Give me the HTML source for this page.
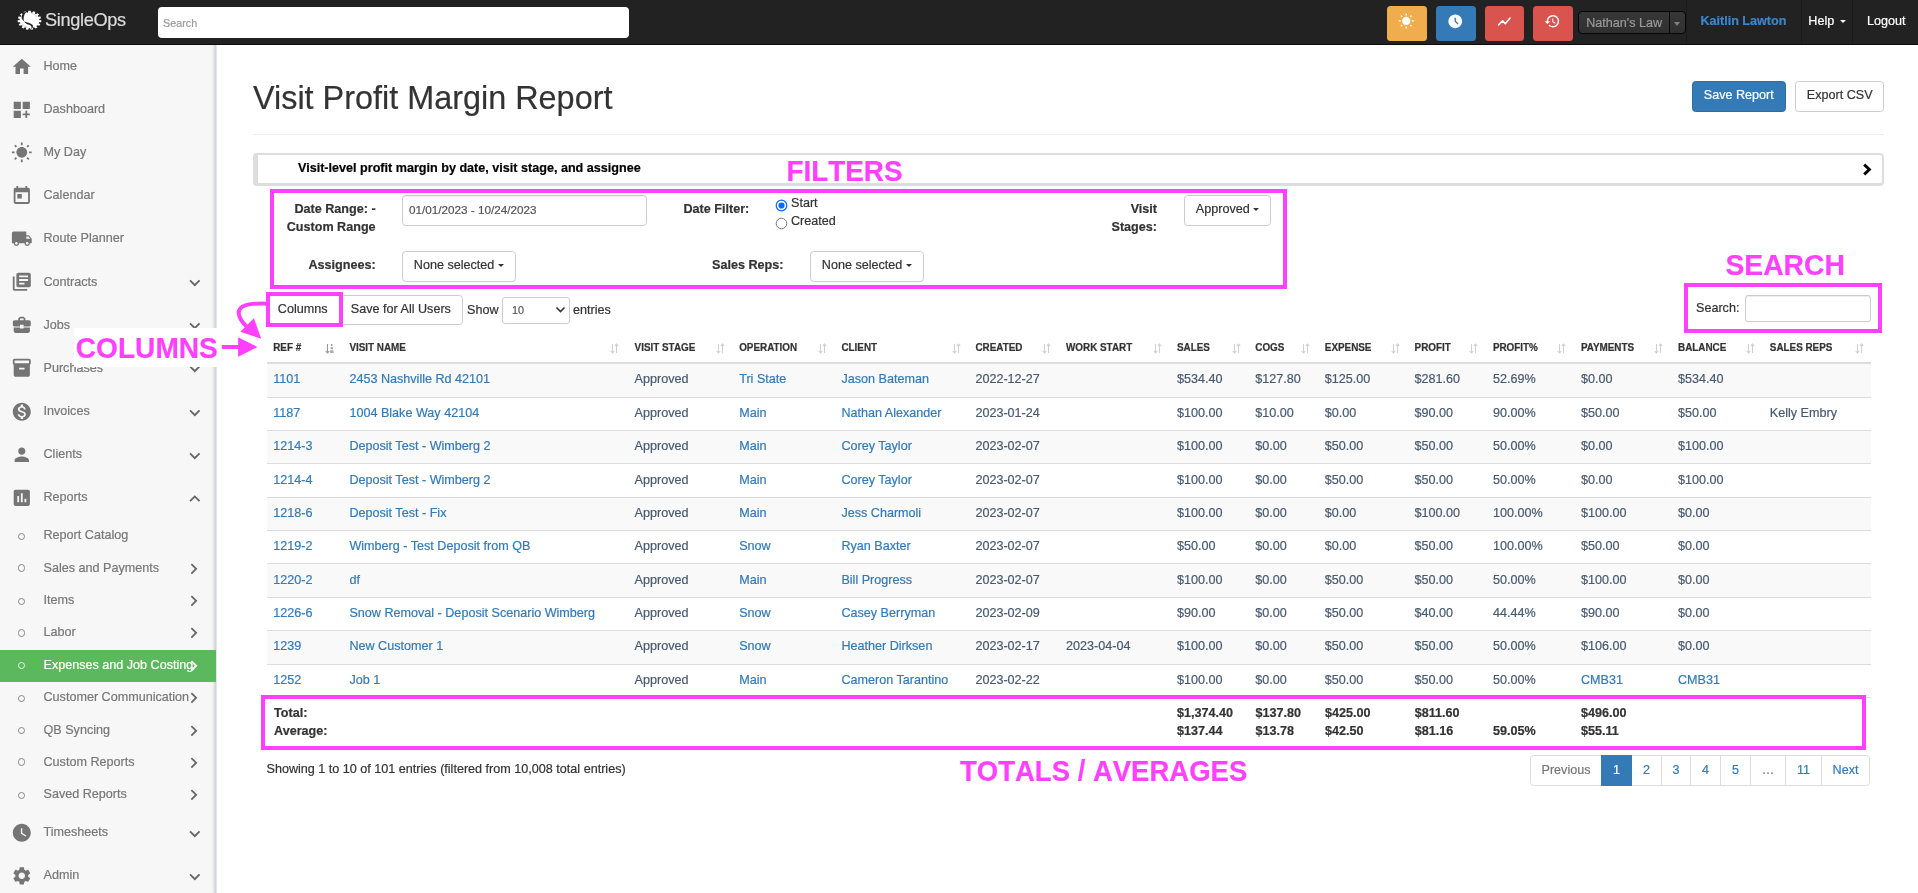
<!DOCTYPE html>
<html><head><meta charset="utf-8"><title>Visit Profit Margin Report</title>
<style>
*{box-sizing:border-box}
html,body{margin:0;padding:0}
body{width:1918px;height:893px;overflow:hidden;position:relative;background:#fff;font-family:"Liberation Sans",sans-serif;font-size:12.6px;line-height:18px;color:#333;-webkit-text-stroke:0.2px}
a{color:#337ab7;text-decoration:none}
/* navbar */
#nav,#side,#main,#anno{will-change:transform}
#nav{position:absolute;left:0;top:0;width:1918px;height:45px;background:#222;border-bottom:1px solid #0c0c0c}
#nav .sep{position:absolute;top:0;width:1px;height:44px;background:#1a1a1a}
#brand{position:absolute;left:45px;top:7.5px;font-size:18.2px;line-height:24px;color:#dcdcdc;letter-spacing:-0.36px}
#logo{position:absolute;left:17.2px;top:10.050px;width:25px;height:20.5px}
#nsearch{position:absolute;left:158px;top:7px;width:471px;height:31px;background:#fff;border-radius:4px;color:#999;font-size:10.8px;line-height:33px;padding-left:5px}
.nb{position:absolute;top:6px;height:35px;border-radius:3.5px}
.nb svg{position:absolute;left:50%;top:50%;width:16.5px;height:16.5px;margin:-11px 0 0 -8.600px;fill:#fff}
#nsel{position:absolute;left:1578px;top:11px;width:107.5px;height:22.6px;border:1px solid #060606;border-radius:4px;background:linear-gradient(#373737,#303030);color:#9a9a9a;font-size:12.6px;line-height:22.6px;padding-left:7.2px}
#nsel i{position:absolute;right:0;top:0;width:16px;height:20.6px;border-left:1px solid #060606;border-radius:0 3px 3px 0}
#nsel i:after{content:"";position:absolute;left:4.5px;top:10px;border:3px solid transparent;border-top:4.5px solid #808080}
.nl{position:absolute;top:12px;font-size:12.6px;line-height:18px;color:#fff;white-space:nowrap}
/* sidebar */
#side{position:absolute;left:0;top:45px;width:217px;height:848px;background:#f7f7f7;border-right:1px solid #dfe8f0;box-shadow:inset -4px 0 3px -2px rgba(0,0,0,.16)}
.si{position:absolute;left:0;width:214px;height:30px;color:#777}
.si svg.ic{position:absolute;left:10.8px;top:4.7px;width:21.6px;height:21.6px;fill:#757575}
.si span{position:absolute;left:43.5px;top:6px;white-space:nowrap}
.si svg.ch{position:absolute;left:184px;top:5.5px;width:21.6px;height:21.6px;fill:#666}
.sub{position:absolute;left:0;width:216px;height:32.4px;color:#777}
.sub b{position:absolute;left:17.6px;top:14.1px;width:7.6px;height:7.6px;border:1px solid #888;border-radius:50%}
.sub span{position:absolute;left:43.5px;top:7px;white-space:nowrap}
.sub svg.ch{position:absolute;left:183px;top:6px;width:21.6px;height:21.6px;fill:#666}
.sub.act{background:#5cb85c;color:#fff}
.sub.act b{border-color:#e8f5e8;top:12.7px}
.sub.act span{top:6px}
.sub.act svg.ch{top:5px}
.sub.act svg.ch{fill:#fff}
/* main */
h1{position:absolute;left:253px;top:78px;margin:0;font-size:32.4px;line-height:40px;font-weight:400;color:#333;white-space:nowrap}
.btn{position:absolute;height:30.6px;border:1px solid #ccc;border-radius:3.6px;background:#fff;color:#333;font-size:12.6px;line-height:18px;padding:4.5px 10.8px;white-space:nowrap}
.btn.pri{background:#337ab7;border-color:#2e6da4;color:#fff}
.caret{display:inline-block;width:0;height:0;margin-left:0;vertical-align:middle;border-top:3.6px solid;border-right:3.6px solid transparent;border-left:3.6px solid transparent}
.lbl{position:absolute;font-weight:700;text-align:right;white-space:nowrap;color:#333}
.txt{position:absolute;white-space:nowrap}
.mg{position:absolute;border:4px solid #ff40ff}
.mt{position:absolute;color:#ff40ff;font-weight:700;font-size:27.4px;line-height:30px;white-space:nowrap;font-kerning:none;transform:scaleY(1.06);transform-origin:0 50%}
/* table */
#tbl{position:absolute;left:267px;top:334px;width:1604px;height:420px}
.th{position:absolute;top:0;height:28px;font-size:9.9px;font-weight:700;text-transform:uppercase;color:#333;line-height:14px;padding:7px 0 0 7px;white-space:nowrap}
.th span{display:inline-block;transform:scaleY(1.13);transform-origin:0 62%}
.th svg{position:absolute;right:8.2px;top:8.5px;width:9px;height:11px}
.tr{position:absolute;left:0;width:1604px;height:33.33px;border-top:1px solid #ddd}
.tr.odd{background:#f9f9f9}
.td{position:absolute;top:5.6px;white-space:nowrap;color:#485a70}
.tf{position:absolute;white-space:nowrap;font-weight:700;color:#333}
.pg{position:absolute;top:755px;height:30.6px;border:1px solid #ddd;background:#fff;color:#337ab7;line-height:18px;padding:5.4px 0;text-align:center}
</style></head><body>
<div id="nav"><svg id="logo" viewBox="-12.5 -10.25 25 20.5"><polygon fill="#fff" points="-1.14,-9.56 1.14,-9.56 1.45,-7.81 2.62,-7.61 3.78,-9.10 5.86,-8.36 5.26,-6.66 6.23,-6.10 8.04,-7.08 9.57,-5.71 8.17,-4.36 8.77,-3.52 10.92,-3.83 11.62,-2.08 9.66,-1.30 9.79,-0.34 11.90,0.08 11.67,1.91 9.48,1.98 9.11,2.90 10.83,3.98 9.69,5.57 7.67,4.92 6.87,5.63 7.89,7.19 6.04,8.27 4.52,7.01 3.43,7.40 3.58,9.16 1.35,9.54 0.60,7.89 -0.60,7.89 -1.35,9.54 -3.58,9.16 -3.43,7.40 -4.52,7.01 -6.04,8.27 -7.89,7.19 -6.87,5.63 -7.67,4.92 -9.69,5.57 -10.83,3.98 -9.11,2.90 -9.48,1.98 -11.67,1.91 -11.90,0.08 -9.79,-0.34 -9.66,-1.30 -11.62,-2.08 -10.92,-3.83 -8.77,-3.52 -8.17,-4.36 -9.57,-5.71 -8.04,-7.08 -6.23,-6.10 -5.26,-6.66 -5.86,-8.36 -3.78,-9.10 -2.62,-7.61 -1.45,-7.81"/><path d="M-2 -9.400C-9.500 -7 -10 0.300 -3 2 3 3.400 5.800 5.500 1.500 9.600 3 6.200 1.500 4.800 -1.500 4.200 -7.500 3 -7 -5.500 -2 -9.400z" fill="#222"/><path d="M2 -6.800C5 -6.600 7 -5 7.500 -3" fill="none" stroke="#bbb" stroke-width="0.600"/><path d="M-7.500 3C-6.500 5.500 -4 7 -1.500 7.200" fill="none" stroke="#bbb" stroke-width="0.600"/></svg><div id="brand">SingleOps</div><div id="nsearch">Search</div><div class="nb" style="left:1387px;width:40px;background:#f0ad4e"><svg class="" viewBox="0 0 24 24"><path d="M6.76 4.84l-1.8-1.79-1.41 1.41 1.79 1.79 1.42-1.41zM4 10.5H1v2h3v-2zm9-9.95h-2V3.5h2V.55zm7.45 3.91l-1.41-1.41-1.79 1.79 1.41 1.41 1.79-1.79zm-3.21 13.7l1.79 1.8 1.41-1.41-1.8-1.79-1.4 1.4zM20 10.5v2h3v-2h-3zm-8-5c-3.31 0-6 2.69-6 6s2.69 6 6 6 6-2.69 6-6-2.69-6-6-6zm-1 16.95h2V19.5h-2v2.95zm-7.45-3.91l1.41 1.41 1.79-1.8-1.41-1.41-1.79 1.8z"/></svg></div><div class="nb" style="left:1436px;width:40px;background:#337ab7"><svg class="" viewBox="0 0 24 24"><path d="M11.99 2C6.47 2 2 6.48 2 12s4.47 10 9.99 10C17.52 22 22 17.52 22 12S17.52 2 11.99 2zm3.3 14.71L11 12.41V7h2v4.59l3.71 3.710-1.420 1.410z"/></svg></div><div class="nb" style="left:1485px;width:39px;background:#d9534f"><svg viewBox="0 0 24 24"><path d="M3.800 17.200l5.700-5.700 4 4L20.500 7.300" fill="none" stroke="#fff" stroke-width="2.300" stroke-linecap="round" stroke-linejoin="round"/></svg></div><div class="nb" style="left:1533px;width:40px;background:#d9534f"><svg class="" viewBox="0 0 24 24"><path d="M13 3c-4.970 0-9 4.030-9 9H1l3.890 3.890.070.140L9 12H6c0-3.870 3.130-7 7-7s7 3.130 7 7-3.130 7-7 7c-1.930 0-3.680-.790-4.940-2.060l-1.420 1.420C8.270 19.990 10.510 21 13 21c4.970 0 9-4.030 9-9s-4.030-9-9-9zm-1 5v5l4.280 2.540.720-1.210-3.500-2.080V8H12z"/></svg></div><div id="nsel">Nathan's Law<i></i></div><div class="sep" style="left:1686px"></div><div class="sep" style="left:1800.5px"></div><div class="sep" style="left:1852px"></div><div class="nl" style="left:1700.400px;color:#3a86cf;font-weight:700">Kaitlin Lawton</div><div class="nl" style="left:1808.300px">Help <span class="caret" style="margin-left:2.500px"></span></div><div class="nl" style="left:1867px">Logout</div></div>
<div id="side"><div class="si" style="top:6px"><svg class="ic" viewBox="0 0 24 24"><path d="M10 20v-6h4v6h5v-8h3L12 3 2 12h3v8z"/></svg><span>Home</span></div><div class="si" style="top:49px"><svg class="ic" viewBox="0 0 24 24"><path d="M3 3h8v8H3zm10 0h8v8h-8zM3 13h8v8H3zm15 0h-2v3h-3v2h3v3h2v-3h3v-2h-3z"/></svg><span>Dashboard</span></div><div class="si" style="top:92px"><svg class="ic" viewBox="0 0 24 24"><path d="M6.76 4.84l-1.8-1.79-1.41 1.41 1.79 1.79 1.42-1.41zM4 10.5H1v2h3v-2zm9-9.95h-2V3.5h2V.55zm7.45 3.91l-1.41-1.41-1.79 1.79 1.41 1.41 1.79-1.79zm-3.21 13.7l1.79 1.8 1.41-1.41-1.8-1.79-1.4 1.4zM20 10.5v2h3v-2h-3zm-8-5c-3.31 0-6 2.69-6 6s2.69 6 6 6 6-2.69 6-6-2.69-6-6-6zm-1 16.95h2V19.5h-2v2.95zm-7.45-3.91l1.41 1.41 1.79-1.8-1.41-1.41-1.79 1.8z"/></svg><span>My Day</span></div><div class="si" style="top:135px"><svg class="ic" viewBox="0 0 24 24"><path d="M19 3h-1V1h-2v2H8V1H6v2H5c-1.11 0-1.99.9-1.99 2L3 19c0 1.1.89 2 2 2h14c1.1 0 2-.9 2-2V5c0-1.1-.9-2-2-2zm0 16H5V8h14v11zM7 10h5v5H7z"/></svg><span>Calendar</span></div><div class="si" style="top:178px"><svg class="ic" viewBox="0 0 24 24"><path d="M20 8h-3V4H3c-1.1 0-2 .9-2 2v11h2c0 1.66 1.34 3 3 3s3-1.34 3-3h6c0 1.66 1.34 3 3 3s3-1.34 3-3h2v-5l-3-4zM6 18.5c-.83 0-1.5-.67-1.5-1.5s.67-1.5 1.5-1.5 1.5.67 1.5 1.5-.67 1.5-1.5 1.5zm13.5-9l1.96 2.500H17V9.5h2.5zm-1.5 9c-.83 0-1.5-.67-1.5-1.5s.67-1.5 1.5-1.5 1.5.67 1.5 1.5-.67 1.5-1.5 1.5z"/></svg><span>Route Planner</span></div><div class="si" style="top:221.5px"><svg class="ic" viewBox="0 0 24 24"><path d="M4 6H2v14c0 1.1.9 2 2 2h14v-2H4V6zm16-4H8c-1.1 0-2 .9-2 2v12c0 1.1.9 2 2 2h12c1.1 0 2-.9 2-2V4c0-1.1-.9-2-2-2zm-1 9H9V9h10v2zm-4 4H9v-2h6v2zm4-8H9V5h10v2z"/></svg><span>Contracts</span><svg class="ch" viewBox="0 0 24 24"><path d="M16.59 8.59L12 13.17 7.41 8.59 6 10l6 6 6-6z"/></svg></div><div class="si" style="top:264.5px"><svg class="ic" viewBox="0 0 24 24"><path d="M10 16v-1H3.01L3 19c0 1.11.89 2 2 2h14c1.11 0 2-.89 2-2v-4h-7v1h-4zm10-9h-4.01V5l-2-2h-4l-2 2v2H4c-1.1 0-2 .9-2 2v3c0 1.11.89 2 2 2h6v-2h4v2h6c1.1 0 2-.9 2-2V9c0-1.1-.9-2-2-2zm-6 0h-4V5h4v2z"/></svg><span>Jobs</span><svg class="ch" viewBox="0 0 24 24"><path d="M16.59 8.59L12 13.17 7.41 8.59 6 10l6 6 6-6z"/></svg></div><div class="si" style="top:307.5px"><svg class="ic" viewBox="0 0 24 24"><path d="M20 2H4c-1 0-2 .9-2 2v3.010c0 .72.43 1.34 1 1.69V20c0 1.1 1.1 2 2 2h14c.9 0 2-.9 2-2V8.7c.57-.35 1-.97 1-1.69V4c0-1.1-1-2-2-2zm-5 12H9v-2h6v2zm5-7H4V4h16v3z"/></svg><span>Purchases</span><svg class="ch" viewBox="0 0 24 24"><path d="M16.59 8.59L12 13.17 7.41 8.59 6 10l6 6 6-6z"/></svg></div><div class="si" style="top:351px"><svg class="ic" viewBox="0 0 24 24"><path d="M12 2C6.48 2 2 6.48 2 12s4.48 10 10 10 10-4.48 10-10S17.52 2 12 2zm1.41 16.09V20h-2.67v-1.93c-1.71-.36-3.16-1.46-3.27-3.4h1.96c.1 1.05.82 1.87 2.65 1.87 1.96 0 2.4-.98 2.4-1.59 0-.83-.44-1.61-2.67-2.14-2.48-.6-4.18-1.62-4.18-3.67 0-1.72 1.39-2.84 3.11-3.21V4h2.67v1.95c1.86.45 2.79 1.86 2.85 3.39H14.3c-.05-1.11-.64-1.87-2.22-1.87-1.5 0-2.4.68-2.4 1.64 0 .84.65 1.39 2.67 1.91s4.18 1.39 4.18 3.91c-.01 1.83-1.38 2.83-3.12 3.16z"/></svg><span>Invoices</span><svg class="ch" viewBox="0 0 24 24"><path d="M16.59 8.59L12 13.17 7.41 8.59 6 10l6 6 6-6z"/></svg></div><div class="si" style="top:394px"><svg class="ic" viewBox="0 0 24 24"><path d="M12 12c2.21 0 4-1.79 4-4s-1.79-4-4-4-4 1.79-4 4 1.79 4 4 4zm0 2c-2.67 0-8 1.34-8 4v2h16v-2c0-2.660-5.33-4-8-4z"/></svg><span>Clients</span><svg class="ch" viewBox="0 0 24 24"><path d="M16.59 8.59L12 13.17 7.41 8.59 6 10l6 6 6-6z"/></svg></div><div class="si" style="top:437px"><svg class="ic" viewBox="0 0 24 24"><path d="M19 3H5c-1.1 0-2 .9-2 2v14c0 1.1.9 2 2 2h14c1.1 0 2-.9 2-2V5c0-1.1-.9-2-2-2zM9 17H7v-7h2v7zm4 0h-2V7h2v10zm4 0h-2v-4h2v4z"/></svg><span>Reports</span><svg class="ch" viewBox="0 0 24 24"><path d="M12 8l-6 6 1.41 1.41L12 10.83l4.59 4.58L18 14z"/></svg></div><div class="si" style="top:772px"><svg class="ic" viewBox="0 0 24 24"><path d="M12 2C6.5 2 2 6.5 2 12s4.5 10 10 10 10-4.500 10-10S17.5 2 12 2zm4.2 14.2L11 13V7h1.5v5.2l4.5 2.7-.8 1.300z"/></svg><span>Timesheets</span><svg class="ch" viewBox="0 0 24 24"><path d="M16.59 8.59L12 13.17 7.41 8.59 6 10l6 6 6-6z"/></svg></div><div class="si" style="top:815px"><svg class="ic" viewBox="0 0 24 24"><path d="M19.14 12.94c.04-.3.06-.61.06-.94 0-.32-.02-.64-.07-.94l2.03-1.58c.18-.14.23-.41.12-.61l-1.92-3.32c-.12-.22-.37-.29-.59-.22l-2.39.96c-.5-.38-1.03-.7-1.62-.94l-.36-2.54c-.04-.24-.24-.41-.48-.41h-3.84c-.24 0-.43.17-.47.41l-.36 2.54c-.59.24-1.13.57-1.62.94l-2.39-.96c-.22-.08-.47 0-.59.22L2.74 8.87c-.12.21-.08.47.12.61l2.03 1.58c-.05.3-.09.63-.09.94s.02.64.07.94l-2.03 1.58c-.18.14-.23.41-.12.61l1.92 3.32c.12.22.37.29.59.22l2.39-.96c.5.38 1.03.7 1.62.94l.36 2.54c.05.24.24.41.48.41h3.84c.24 0 .44-.17.47-.41l.36-2.54c.59-.24 1.13-.56 1.62-.94l2.39.96c.22.08.47 0 .59-.22l1.92-3.32c.12-.22.07-.47-.12-.61l-2.01-1.58zM12 15.6c-1.98 0-3.6-1.62-3.6-3.6s1.62-3.6 3.600-3.600 3.600 1.620 3.600 3.600-1.620 3.600-3.600 3.600z"/></svg><span>Admin</span><svg class="ch" viewBox="0 0 24 24"><path d="M16.59 8.59L12 13.17 7.41 8.59 6 10l6 6 6-6z"/></svg></div><div class="sub" style="top:473.8px"><b style="top:13.8px"></b><span>Report Catalog</span></div><div class="sub" style="top:507.2px"><b style="top:12.3px"></b><span>Sales and Payments</span><svg class="ch" viewBox="0 0 24 24"><path d="M10 6L8.59 7.41 13.17 12l-4.58 4.59L10 18l6-6z"/></svg></div><div class="sub" style="top:538.8px"><b style="top:13.8px"></b><span>Items</span><svg class="ch" viewBox="0 0 24 24"><path d="M10 6L8.59 7.41 13.17 12l-4.58 4.59L10 18l6-6z"/></svg></div><div class="sub" style="top:571.2px"><b style="top:13.3px"></b><span>Labor</span><svg class="ch" viewBox="0 0 24 24"><path d="M10 6L8.59 7.41 13.17 12l-4.58 4.59L10 18l6-6z"/></svg></div><div class="sub act" style="top:604.8px"><b style="top:11.8px"></b><span>Expenses and Job Costing</span><svg class="ch" viewBox="0 0 24 24"><path d="M10 6L8.59 7.41 13.17 12l-4.58 4.59L10 18l6-6z"/></svg></div><div class="sub" style="top:635.8px"><b style="top:13.9px"></b><span>Customer Communication</span><svg class="ch" viewBox="0 0 24 24"><path d="M10 6L8.59 7.41 13.17 12l-4.58 4.59L10 18l6-6z"/></svg></div><div class="sub" style="top:669.2px"><b style="top:12.6px"></b><span>QB Syncing</span><svg class="ch" viewBox="0 0 24 24"><path d="M10 6L8.59 7.41 13.17 12l-4.58 4.59L10 18l6-6z"/></svg></div><div class="sub" style="top:700.8px"><b style="top:12.7px"></b><span>Custom Reports</span><svg class="ch" viewBox="0 0 24 24"><path d="M10 6L8.59 7.41 13.17 12l-4.58 4.59L10 18l6-6z"/></svg></div><div class="sub" style="top:733.2px"><b style="top:13.4px"></b><span>Saved Reports</span><svg class="ch" viewBox="0 0 24 24"><path d="M10 6L8.59 7.41 13.17 12l-4.58 4.59L10 18l6-6z"/></svg></div></div>
<div id="main"><h1>Visit Profit Margin Report</h1><div class="btn pri" style="left:1692px;top:81px;width:94px;padding-top:3.6px">Save Report</div><div class="btn" style="left:1795px;top:81px;width:89px;padding-top:3.6px">Export CSV</div><div style="position:absolute;left:253px;top:134px;width:1631px;height:1px;background:#eee"></div><div style="position:absolute;left:253px;top:153px;width:1631px;height:33px;border:2px solid #ddd;border-left-width:5px;border-bottom-width:3px;border-radius:4px;background:#fff"></div><div class="txt" style="left:298px;top:158.5px;font-weight:700;color:#000">Visit-level profit margin by date, visit stage, and assignee</div><svg style="position:absolute;left:1862.300px;top:163px;width:10px;height:13px" viewBox="0 0 10 13"><path d="M2.200 1.600L7.400 6.500 2.200 11.400" fill="none" stroke="#000" stroke-width="2.900"/></svg><div class="lbl" style="left:250px;width:125.600px;top:200px">Date Range: -<br>Custom Range</div><div style="position:absolute;left:402px;top:195.3px;width:244.5px;height:30.3px;border:1px solid #ccc;border-radius:3.6px;background:#fff;color:#555;font-size:11.7px;line-height:28.2px;padding-left:6px;box-shadow:inset 0 1px 1px rgba(0,0,0,.075)">01/01/2023 - 10/24/2023</div><div class="lbl" style="left:650px;width:99.300px;top:200px">Date Filter:</div><svg style="position:absolute;left:775px;top:198.500px;width:13px;height:13px" viewBox="0 0 13 13"><circle cx="6.5" cy="6.5" r="5.3" fill="#fff" stroke="#0b6cf0" stroke-width="1.2"/><circle cx="6.5" cy="6.5" r="3.1" fill="#0b6cf0"/></svg><svg style="position:absolute;left:775px;top:216.500px;width:13px;height:13px" viewBox="0 0 13 13"><circle cx="6.5" cy="6.5" r="5.3" fill="#fff" stroke="#767676" stroke-width="1"/></svg><div class="txt" style="left:791px;top:194px">Start</div><div class="txt" style="left:791px;top:212px">Created</div><div class="lbl" style="left:1080px;width:77px;top:200px">Visit<br>Stages:</div><div class="btn" style="left:1184px;top:195px;width:87px;padding-top:4px">Approved <span class="caret"></span></div><div class="lbl" style="left:250px;width:125.600px;top:256px">Assignees:</div><div class="btn" style="left:402px;top:251px;width:114px;padding-top:4px">None selected <span class="caret"></span></div><div class="lbl" style="left:650px;width:133.400px;top:256px">Sales Reps:</div><div class="btn" style="left:810px;top:251px;width:114px;padding-top:4px">None selected <span class="caret"></span></div><div class="btn" style="left:266px;top:294.500px;width:74px;border-radius:3.6px 0 0 3.6px">Columns</div><div class="btn" style="left:339px;top:294.500px;width:124px;border-radius:0 3.6px 3.6px 0">Save for All Users</div><div class="txt" style="left:467px;top:301px">Show</div><div style="position:absolute;left:502px;top:297px;width:67.5px;height:27px;border:1px solid #ccc;border-radius:3px;background:#fff;color:#555;font-size:10.8px;line-height:25px;padding-left:9px">10<svg style="position:absolute;right:3px;top:8px;width:11px;height:8px" viewBox="0 0 11 8"><path d="M1.5 1.5L5.5 5.500 9.500 1.500" fill="none" stroke="#333" stroke-width="1.600"/></svg></div><div class="txt" style="left:573px;top:301px">entries</div><div class="txt" style="left:1696px;top:299px">Search:</div><div style="position:absolute;left:1745px;top:295px;width:126px;height:27px;border:1px solid #ccc;border-radius:3px;background:#fff;box-shadow:inset 0 1px 1px rgba(0,0,0,.075)"></div><div id="tbl"><div class="th" style="left:0px;width:75px;padding-left:6.2px"><span>Ref #</span><svg viewBox="0 0 9 11"><g fill="none" stroke="#999" stroke-width="1.1"><path d="M2.5 1v9M0.7 8L2.5 10 4.3 8"/></g><g fill="#aaa"><rect x="6" y="1" width="1.5" height="2"/><rect x="5.6" y="4" width="2.4" height="2.3"/><rect x="5.2" y="7.3" width="3.3" height="2.7"/></g></svg></div><div class="th" style="left:75px;width:285px;padding-left:7.4px"><span>Visit Name</span><svg viewBox="0 0 9 11"><g fill="none" stroke="#d0d0d0" stroke-width="1.1"><path d="M2.5 1v9M0.7 8L2.5 10 4.3 8M6.5 10V1M4.7 3L6.5 1 8.3 3"/></g></svg></div><div class="th" style="left:360px;width:106px;padding-left:7.6px"><span>Visit Stage</span><svg viewBox="0 0 9 11"><g fill="none" stroke="#d0d0d0" stroke-width="1.1"><path d="M2.5 1v9M0.7 8L2.5 10 4.3 8M6.5 10V1M4.7 3L6.5 1 8.3 3"/></g></svg></div><div class="th" style="left:466px;width:102px;padding-left:6.2px"><span>Operation</span><svg viewBox="0 0 9 11"><g fill="none" stroke="#d0d0d0" stroke-width="1.1"><path d="M2.5 1v9M0.7 8L2.5 10 4.3 8M6.5 10V1M4.7 3L6.5 1 8.3 3"/></g></svg></div><div class="th" style="left:568px;width:134px;padding-left:6.4px"><span>Client</span><svg viewBox="0 0 9 11"><g fill="none" stroke="#d0d0d0" stroke-width="1.1"><path d="M2.5 1v9M0.7 8L2.5 10 4.3 8M6.5 10V1M4.7 3L6.5 1 8.3 3"/></g></svg></div><div class="th" style="left:702px;width:90px;padding-left:6.4px"><span>Created</span><svg viewBox="0 0 9 11"><g fill="none" stroke="#d0d0d0" stroke-width="1.1"><path d="M2.5 1v9M0.7 8L2.5 10 4.3 8M6.5 10V1M4.7 3L6.5 1 8.3 3"/></g></svg></div><div class="th" style="left:792px;width:111px;padding-left:7.0px"><span>Work Start</span><svg viewBox="0 0 9 11"><g fill="none" stroke="#d0d0d0" stroke-width="1.1"><path d="M2.5 1v9M0.7 8L2.5 10 4.3 8M6.5 10V1M4.7 3L6.5 1 8.3 3"/></g></svg></div><div class="th" style="left:903px;width:79px;padding-left:7.0px"><span>Sales</span><svg viewBox="0 0 9 11"><g fill="none" stroke="#d0d0d0" stroke-width="1.1"><path d="M2.5 1v9M0.7 8L2.5 10 4.3 8M6.5 10V1M4.7 3L6.5 1 8.3 3"/></g></svg></div><div class="th" style="left:982px;width:69px;padding-left:6.3px"><span>COGS</span><svg viewBox="0 0 9 11"><g fill="none" stroke="#d0d0d0" stroke-width="1.1"><path d="M2.5 1v9M0.7 8L2.5 10 4.3 8M6.5 10V1M4.7 3L6.5 1 8.3 3"/></g></svg></div><div class="th" style="left:1051px;width:90px;padding-left:6.8px"><span>Expense</span><svg viewBox="0 0 9 11"><g fill="none" stroke="#d0d0d0" stroke-width="1.1"><path d="M2.5 1v9M0.7 8L2.5 10 4.3 8M6.5 10V1M4.7 3L6.5 1 8.3 3"/></g></svg></div><div class="th" style="left:1141px;width:78px;padding-left:6.6px"><span>Profit</span><svg viewBox="0 0 9 11"><g fill="none" stroke="#d0d0d0" stroke-width="1.1"><path d="M2.5 1v9M0.7 8L2.5 10 4.3 8M6.5 10V1M4.7 3L6.5 1 8.3 3"/></g></svg></div><div class="th" style="left:1219px;width:88px;padding-left:6.9px"><span>Profit%</span><svg viewBox="0 0 9 11"><g fill="none" stroke="#d0d0d0" stroke-width="1.1"><path d="M2.5 1v9M0.7 8L2.5 10 4.3 8M6.5 10V1M4.7 3L6.5 1 8.3 3"/></g></svg></div><div class="th" style="left:1307px;width:97px;padding-left:6.9px"><span>Payments</span><svg viewBox="0 0 9 11"><g fill="none" stroke="#d0d0d0" stroke-width="1.1"><path d="M2.5 1v9M0.7 8L2.5 10 4.3 8M6.5 10V1M4.7 3L6.5 1 8.3 3"/></g></svg></div><div class="th" style="left:1404px;width:92px;padding-left:7.0px"><span>Balance</span><svg viewBox="0 0 9 11"><g fill="none" stroke="#d0d0d0" stroke-width="1.1"><path d="M2.5 1v9M0.7 8L2.5 10 4.3 8M6.5 10V1M4.7 3L6.5 1 8.3 3"/></g></svg></div><div class="th" style="left:1496px;width:109px;padding-left:6.8px"><span>Sales Reps</span><svg viewBox="0 0 9 11"><g fill="none" stroke="#d0d0d0" stroke-width="1.1"><path d="M2.5 1v9M0.7 8L2.5 10 4.3 8M6.5 10V1M4.7 3L6.5 1 8.3 3"/></g></svg></div><div style="position:absolute;left:0;top:28px;width:1604px;height:2px;background:#ddd"></div><div class="tr odd" style="top:29px;height:34px"><a class="td" style="left:6.2px;color:#337ab7;top:6.3px">1101</a><a class="td" style="left:82.4px;color:#337ab7;top:6.3px">2453 Nashville Rd 42101</a><div class="td" style="left:367.6px;top:6.3px">Approved</div><a class="td" style="left:472.2px;color:#337ab7;top:6.3px">Tri State</a><a class="td" style="left:574.4px;color:#337ab7;top:6.3px">Jason Bateman</a><div class="td" style="left:708.4px;top:6.3px">2022-12-27</div><div class="td" style="left:910px;top:6.3px">$534.40</div><div class="td" style="left:988.3px;top:6.3px">$127.80</div><div class="td" style="left:1057.8px;top:6.3px">$125.00</div><div class="td" style="left:1147.6px;top:6.3px">$281.60</div><div class="td" style="left:1225.9px;top:6.3px">52.69%</div><div class="td" style="left:1313.9px;top:6.3px">$0.00</div><div class="td" style="left:1411px;top:6.3px">$534.40</div></div><div class="tr" style="top:63px;height:33px"><a class="td" style="left:6.2px;color:#337ab7;top:6.3px">1187</a><a class="td" style="left:82.4px;color:#337ab7;top:6.3px">1004 Blake Way 42104</a><div class="td" style="left:367.6px;top:6.3px">Approved</div><a class="td" style="left:472.2px;color:#337ab7;top:6.3px">Main</a><a class="td" style="left:574.4px;color:#337ab7;top:6.3px">Nathan Alexander</a><div class="td" style="left:708.4px;top:6.3px">2023-01-24</div><div class="td" style="left:910px;top:6.3px">$100.00</div><div class="td" style="left:988.3px;top:6.3px">$10.00</div><div class="td" style="left:1057.8px;top:6.3px">$0.00</div><div class="td" style="left:1147.6px;top:6.3px">$90.00</div><div class="td" style="left:1225.9px;top:6.3px">90.00%</div><div class="td" style="left:1313.9px;top:6.3px">$50.00</div><div class="td" style="left:1411px;top:6.3px">$50.00</div><div class="td" style="left:1502.8px;top:6.3px">Kelly Embry</div></div><div class="tr odd" style="top:96px;height:33px"><a class="td" style="left:6.2px;color:#337ab7;top:6.3px">1214-3</a><a class="td" style="left:82.4px;color:#337ab7;top:6.3px">Deposit Test - Wimberg 2</a><div class="td" style="left:367.6px;top:6.3px">Approved</div><a class="td" style="left:472.2px;color:#337ab7;top:6.3px">Main</a><a class="td" style="left:574.4px;color:#337ab7;top:6.3px">Corey Taylor</a><div class="td" style="left:708.4px;top:6.3px">2023-02-07</div><div class="td" style="left:910px;top:6.3px">$100.00</div><div class="td" style="left:988.3px;top:6.3px">$0.00</div><div class="td" style="left:1057.8px;top:6.3px">$50.00</div><div class="td" style="left:1147.6px;top:6.3px">$50.00</div><div class="td" style="left:1225.9px;top:6.3px">50.00%</div><div class="td" style="left:1313.9px;top:6.3px">$0.00</div><div class="td" style="left:1411px;top:6.3px">$100.00</div></div><div class="tr" style="top:129px;height:34px"><a class="td" style="left:6.2px;color:#337ab7;top:7.3px">1214-4</a><a class="td" style="left:82.4px;color:#337ab7;top:7.3px">Deposit Test - Wimberg 2</a><div class="td" style="left:367.6px;top:7.3px">Approved</div><a class="td" style="left:472.2px;color:#337ab7;top:7.3px">Main</a><a class="td" style="left:574.4px;color:#337ab7;top:7.3px">Corey Taylor</a><div class="td" style="left:708.4px;top:7.3px">2023-02-07</div><div class="td" style="left:910px;top:7.3px">$100.00</div><div class="td" style="left:988.3px;top:7.3px">$0.00</div><div class="td" style="left:1057.8px;top:7.3px">$50.00</div><div class="td" style="left:1147.6px;top:7.3px">$50.00</div><div class="td" style="left:1225.9px;top:7.3px">50.00%</div><div class="td" style="left:1313.9px;top:7.3px">$0.00</div><div class="td" style="left:1411px;top:7.3px">$100.00</div></div><div class="tr odd" style="top:163px;height:33px"><a class="td" style="left:6.2px;color:#337ab7;top:6.3px">1218-6</a><a class="td" style="left:82.4px;color:#337ab7;top:6.3px">Deposit Test - Fix</a><div class="td" style="left:367.6px;top:6.3px">Approved</div><a class="td" style="left:472.2px;color:#337ab7;top:6.3px">Main</a><a class="td" style="left:574.4px;color:#337ab7;top:6.3px">Jess Charmoli</a><div class="td" style="left:708.4px;top:6.3px">2023-02-07</div><div class="td" style="left:910px;top:6.3px">$100.00</div><div class="td" style="left:988.3px;top:6.3px">$0.00</div><div class="td" style="left:1057.8px;top:6.3px">$0.00</div><div class="td" style="left:1147.6px;top:6.3px">$100.00</div><div class="td" style="left:1225.9px;top:6.3px">100.00%</div><div class="td" style="left:1313.9px;top:6.3px">$100.00</div><div class="td" style="left:1411px;top:6.3px">$0.00</div></div><div class="tr" style="top:196px;height:33px"><a class="td" style="left:6.2px;color:#337ab7;top:6.3px">1219-2</a><a class="td" style="left:82.4px;color:#337ab7;top:6.3px">Wimberg - Test Deposit from QB</a><div class="td" style="left:367.6px;top:6.3px">Approved</div><a class="td" style="left:472.2px;color:#337ab7;top:6.3px">Snow</a><a class="td" style="left:574.4px;color:#337ab7;top:6.3px">Ryan Baxter</a><div class="td" style="left:708.4px;top:6.3px">2023-02-07</div><div class="td" style="left:910px;top:6.3px">$50.00</div><div class="td" style="left:988.3px;top:6.3px">$0.00</div><div class="td" style="left:1057.8px;top:6.3px">$0.00</div><div class="td" style="left:1147.6px;top:6.3px">$50.00</div><div class="td" style="left:1225.9px;top:6.3px">100.00%</div><div class="td" style="left:1313.9px;top:6.3px">$50.00</div><div class="td" style="left:1411px;top:6.3px">$0.00</div></div><div class="tr odd" style="top:229px;height:34px"><a class="td" style="left:6.2px;color:#337ab7;top:7.3px">1220-2</a><a class="td" style="left:82.4px;color:#337ab7;top:7.3px">df</a><div class="td" style="left:367.6px;top:7.3px">Approved</div><a class="td" style="left:472.2px;color:#337ab7;top:7.3px">Main</a><a class="td" style="left:574.4px;color:#337ab7;top:7.3px">Bill Progress</a><div class="td" style="left:708.4px;top:7.3px">2023-02-07</div><div class="td" style="left:910px;top:7.3px">$100.00</div><div class="td" style="left:988.3px;top:7.3px">$0.00</div><div class="td" style="left:1057.8px;top:7.3px">$50.00</div><div class="td" style="left:1147.6px;top:7.3px">$50.00</div><div class="td" style="left:1225.9px;top:7.3px">50.00%</div><div class="td" style="left:1313.9px;top:7.3px">$100.00</div><div class="td" style="left:1411px;top:7.3px">$0.00</div></div><div class="tr" style="top:263px;height:33px"><a class="td" style="left:6.2px;color:#337ab7;top:6.3px">1226-6</a><a class="td" style="left:82.4px;color:#337ab7;top:6.3px">Snow Removal - Deposit Scenario Wimberg</a><div class="td" style="left:367.6px;top:6.3px">Approved</div><a class="td" style="left:472.2px;color:#337ab7;top:6.3px">Snow</a><a class="td" style="left:574.4px;color:#337ab7;top:6.3px">Casey Berryman</a><div class="td" style="left:708.4px;top:6.3px">2023-02-09</div><div class="td" style="left:910px;top:6.3px">$90.00</div><div class="td" style="left:988.3px;top:6.3px">$0.00</div><div class="td" style="left:1057.8px;top:6.3px">$50.00</div><div class="td" style="left:1147.6px;top:6.3px">$40.00</div><div class="td" style="left:1225.9px;top:6.3px">44.44%</div><div class="td" style="left:1313.9px;top:6.3px">$90.00</div><div class="td" style="left:1411px;top:6.3px">$0.00</div></div><div class="tr odd" style="top:296px;height:34px"><a class="td" style="left:6.2px;color:#337ab7;top:6.3px">1239</a><a class="td" style="left:82.4px;color:#337ab7;top:6.3px">New Customer 1</a><div class="td" style="left:367.6px;top:6.3px">Approved</div><a class="td" style="left:472.2px;color:#337ab7;top:6.3px">Snow</a><a class="td" style="left:574.4px;color:#337ab7;top:6.3px">Heather Dirksen</a><div class="td" style="left:708.4px;top:6.3px">2023-02-17</div><div class="td" style="left:799px;top:6.3px">2023-04-04</div><div class="td" style="left:910px;top:6.3px">$100.00</div><div class="td" style="left:988.3px;top:6.3px">$0.00</div><div class="td" style="left:1057.8px;top:6.3px">$50.00</div><div class="td" style="left:1147.6px;top:6.3px">$50.00</div><div class="td" style="left:1225.9px;top:6.3px">50.00%</div><div class="td" style="left:1313.9px;top:6.3px">$106.00</div><div class="td" style="left:1411px;top:6.3px">$0.00</div></div><div class="tr" style="top:330px;height:33px"><a class="td" style="left:6.2px;color:#337ab7;top:6.3px">1252</a><a class="td" style="left:82.4px;color:#337ab7;top:6.3px">Job 1</a><div class="td" style="left:367.6px;top:6.3px">Approved</div><a class="td" style="left:472.2px;color:#337ab7;top:6.3px">Main</a><a class="td" style="left:574.4px;color:#337ab7;top:6.3px">Cameron Tarantino</a><div class="td" style="left:708.4px;top:6.3px">2023-02-22</div><div class="td" style="left:910px;top:6.3px">$100.00</div><div class="td" style="left:988.3px;top:6.3px">$0.00</div><div class="td" style="left:1057.8px;top:6.3px">$50.00</div><div class="td" style="left:1147.6px;top:6.3px">$50.00</div><div class="td" style="left:1225.9px;top:6.3px">50.00%</div><a class="td" style="left:1313.9px;color:#337ab7;top:6.3px">CMB31</a><a class="td" style="left:1411px;color:#337ab7;top:6.3px">CMB31</a></div><div style="position:absolute;left:0;top:363px;width:1604px;height:1px;background:#ddd"></div><div class="tf" style="left:7px;top:370px">Total:</div><div class="tf" style="left:7px;top:388px">Average:</div><div class="tf" style="left:910.1px;top:370px">$1,374.40</div><div class="tf" style="left:910.1px;top:388px">$137.44</div><div class="tf" style="left:988.4px;top:370px">$137.80</div><div class="tf" style="left:988.4px;top:388px">$13.78</div><div class="tf" style="left:1057.9px;top:370px">$425.00</div><div class="tf" style="left:1057.9px;top:388px">$42.50</div><div class="tf" style="left:1147.7px;top:370px">$811.60</div><div class="tf" style="left:1147.7px;top:388px">$81.16</div><div class="tf" style="left:1226px;top:388px">59.05%</div><div class="tf" style="left:1314px;top:370px">$496.00</div><div class="tf" style="left:1314px;top:388px">$55.11</div></div><div class="txt" style="left:266.500px;top:760px">Showing 1 to 10 of 101 entries (filtered from 10,008 total entries)</div><div class="pg" style="left:1530px;width:72px;color:#777;border-radius:3.6px 0 0 3.6px;">Previous</div><div class="pg" style="left:1601px;width:31px;background:#337ab7;border-color:#337ab7;color:#fff;z-index:2;">1</div><div class="pg" style="left:1631px;width:31px;">2</div><div class="pg" style="left:1661px;width:30px;">3</div><div class="pg" style="left:1690px;width:31px;">4</div><div class="pg" style="left:1720px;width:31px;">5</div><div class="pg" style="left:1750px;width:36px;color:#777;">…</div><div class="pg" style="left:1785px;width:37px;">11</div><div class="pg" style="left:1821px;width:49px;border-radius:0 3.6px 3.6px 0;">Next</div></div>
<div id="anno"><div class="mg" style="left:270px;top:189px;width:1017px;height:100px"></div><div class="mg" style="left:266px;top:292px;width:77px;height:34.5px"></div><div class="mg" style="left:1684px;top:283px;width:198px;height:50px"></div><div class="mg" style="left:261px;top:695px;width:1605px;height:55px"></div><div class="mt" style="left:786.400px;top:156px;font-size:27.9px">FILTERS</div><div class="mt" style="left:1725.400px;top:249.300px;font-size:28.3px">SEARCH</div><div class="mt" style="left:960px;top:756.300px;font-size:27.5px">TOTALS / AVERAGES</div><div style="position:absolute;left:74px;top:328px;width:146px;height:39px;background:#fff"></div><div class="mt" style="left:75.800px;top:333px;font-size:28.1px">COLUMNS</div><svg style="position:absolute;left:0;top:0;width:1918px;height:893px" viewBox="0 0 1918 893"><g fill="none" stroke="#ff40ff" stroke-width="4"><path d="M221.800 347H240"/><path d="M267 303.700C250 303.200 237.500 304.500 238.800 314 239.700 320 244 324.500 249 328.500"/></g><g fill="#ff40ff"><path d="M238.100 337.200L257.500 347 238.100 356.800z"/><path d="M253.900 318.300L240.300 331.800 261.200 338.800z"/></g></svg></div>
</body></html>
